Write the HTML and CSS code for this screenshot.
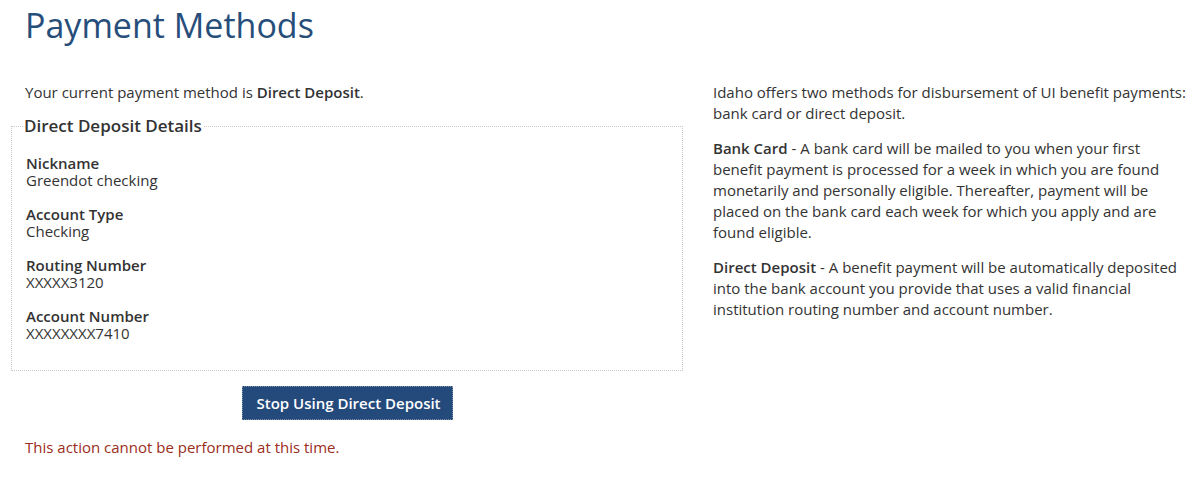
FILE: index.html
```html
<!DOCTYPE html>
<html lang="en">
<head>
<meta charset="utf-8">
<title>Payment Methods</title>
<link rel="stylesheet" href="styles.css">
</head>
<body>
<div class="page">
  <h1 class="title">Payment Methods</h1>
  <div class="columns">
    <div class="left">
      <p class="current">Your current payment method is <strong>Direct Deposit</strong>.</p>
      <fieldset class="details">
        <legend class="details-legend">Direct Deposit Details</legend>
        <dl class="fields">
          <div class="field"><dt>Nickname</dt><dd>Greendot checking</dd></div>
          <div class="field"><dt>Account Type</dt><dd>Checking</dd></div>
          <div class="field"><dt>Routing Number</dt><dd>XXXXX3120</dd></div>
          <div class="field"><dt>Account Number</dt><dd>XXXXXXXX7410</dd></div>
        </dl>
      </fieldset>
      <div class="actions">
        <button class="btn-primary" type="button">Stop Using Direct Deposit</button>
      </div>
      <p class="error">This action cannot be performed at this time.</p>
    </div>
    <div class="right">
      <p>Idaho offers two methods for disbursement of UI benefit payments: bank card or direct deposit.</p>
      <p><strong>Bank Card</strong> - A bank card will be mailed to you when your first benefit payment is processed for a week in which you are found monetarily and personally eligible. Thereafter, payment will be placed on the bank card each week for which you apply and are found eligible.</p>
      <p><strong>Direct Deposit</strong> - A benefit payment will be automatically deposited into the bank account you provide that uses a valid financial institution routing number and account number.</p>
    </div>
  </div>
</div>
</body>
</html>
```
FILE: styles.css
```css
html, body {
  margin: 0;
  padding: 0;
  background: #ffffff;
}
body {
  font-family: "Open Sans", "Liberation Sans", sans-serif;
  color: #333333;
  font-size: 15px;
  line-height: 21px;
}
.page {
  padding: 0 12px 0 11px;
}
.title {
  margin: 4px 0 35px 14px;
  font-size: 34px;
  line-height: 43px;
  font-weight: 400;
  color: #274e7a;
}
.columns {
  display: flex;
  gap: 30px;
}
.left {
  width: 672px;
  flex: none;
}
.right {
  flex: 1;
}
.right p {
  margin: 0 0 14px;
}
strong {
  font-weight: 600;
}
.current {
  margin: 0 0 12px 14px;
}
.details {
  margin: 0;
  border: 1px dotted #c8c8c8;
  padding: 18px 14px 28px;
}
.details-legend {
  font-size: 17px;
  line-height: 22px;
  font-weight: 600;
  padding: 0 1px;
  margin-left: -3px;
  color: #333333;
}
.fields {
  margin: 0;
  display: flex;
  flex-direction: column;
  gap: 17px;
}
.field dt {
  font-size: 15px;
  line-height: 17px;
  font-weight: 600;
}
.field dd {
  margin: 0;
  font-size: 15px;
  line-height: 17px;
}
.actions {
  display: flex;
  justify-content: center;
  margin-top: 15px;
}
.btn-primary {
  font-family: inherit;
  font-size: 15px;
  font-weight: 600;
  line-height: 21px;
  color: #ffffff;
  background: #244a7b;
  border: 1px dotted #7f93ad;
  padding: 5px 14px;
  height: 34px;
  width: 211px;
  white-space: nowrap;
  cursor: pointer;
}
.error {
  margin: 17px 0 0 14px;
  color: #9b2d20;
}
```
